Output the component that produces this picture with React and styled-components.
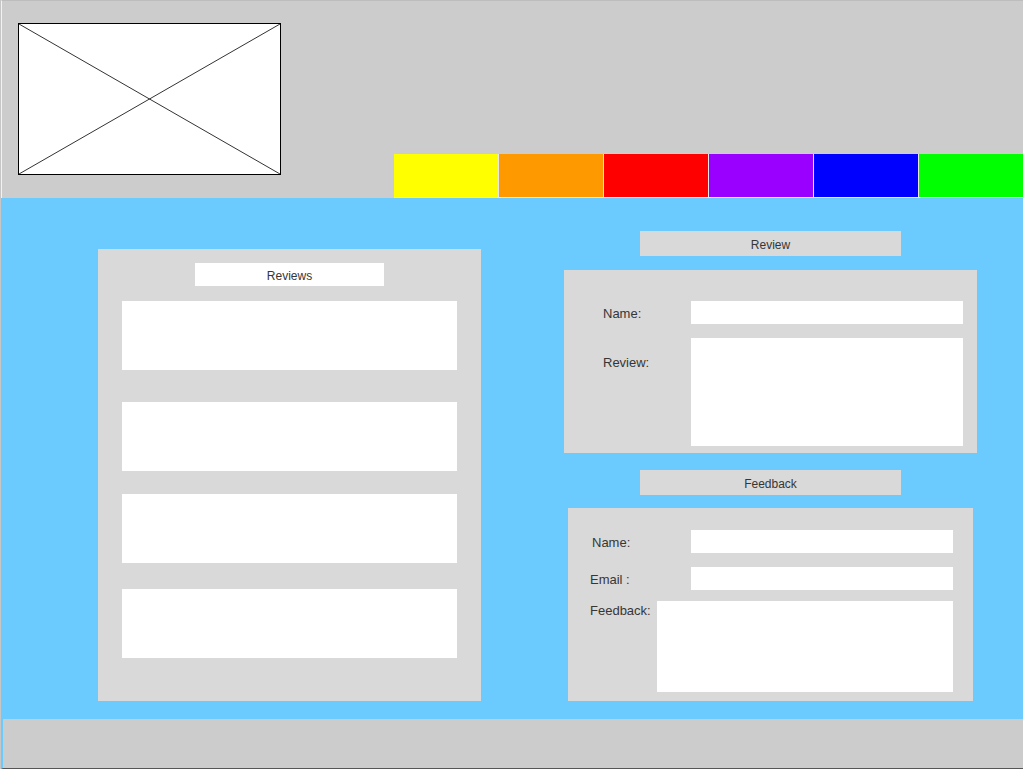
import React from 'react'
import styled, { createGlobalStyle } from 'styled-components'

const GlobalStyle = createGlobalStyle`
  html, body {
    margin: 0;
    padding: 0;
    background: #c6c6c6;
  }
  * {
    box-sizing: border-box;
  }
`

const BLUE = '#6ccbfe'
const PANEL = '#d9d9d9'
const navColors = ['#ffff00', '#ff9900', '#ff0000', '#9900ff', '#0000ff', '#00ff00']
const cardGaps = [15, 32, 23, 26]

const App = () => {
  return (
    <Page>
      <GlobalStyle />
      <Header>
        <Logo>
          <svg width="261" height="150" viewBox="0 0 261 150" preserveAspectRatio="none">
            <line x1="0" y1="0" x2="261" y2="150" stroke="#333" strokeWidth="1" />
            <line x1="261" y1="0" x2="0" y2="150" stroke="#333" strokeWidth="1" />
          </svg>
        </Logo>
        <Nav>
          {navColors.map((c) => (
            <NavCell key={c} $color={c} />
          ))}
        </Nav>
      </Header>

      <Main>
        <ReviewsPanel>
          <PanelTitle>Reviews</PanelTitle>
          {cardGaps.map((g, i) => (
            <ReviewCard key={i} $gap={g} />
          ))}
        </ReviewsPanel>

        <RightColumn>
          <SectionBar $after={14}>Review</SectionBar>
          <FormPanel $width={413} $pad="31px 14px 7px 39px" $after={17}>
            <FormRow>
              <Label $width={88}>Name:</Label>
              <Field />
            </FormRow>
            <FormRow $top $gap={14}>
              <Label $width={88} $offset={15}>Review:</Label>
              <Area $height={108} />
            </FormRow>
          </FormPanel>

          <SectionBar $after={13}>Feedback</SectionBar>
          <FormPanel $width={405} $pad="22px 20px 9px 22px">
            <FormRow>
              <Label $width={101} $indent={2}>Name:</Label>
              <Field />
            </FormRow>
            <FormRow $gap={14}>
              <Label $width={101}>Email :</Label>
              <Field />
            </FormRow>
            <FormRow $top $gap={11}>
              <Label $width={67}>Feedback:</Label>
              <Area $height={91} />
            </FormRow>
          </FormPanel>
        </RightColumn>
      </Main>

      <Footer />
    </Page>
  )
}

const Page = styled.div`
  width: 1023px;
  padding-left: 1px;
  background: #c6c6c6;
  font-family: "Liberation Sans", Arial, sans-serif;
  color: #363636;
`

const Header = styled.header`
  display: flex;
  align-items: flex-start;
  height: 198px;
  background: #cccccc;
  border-top: 1px solid #bdbdbd;
  border-left: 1px solid #f2f2f2;
`

const Logo = styled.div`
  width: 263px;
  height: 152px;
  margin: 22px 0 0 16px;
  background: #fff;
  border: 1px solid #000;

  svg {
    display: block;
  }
`

const Nav = styled.nav`
  display: flex;
  gap: 1px;
  margin-left: auto;
  align-self: flex-end;
  padding-bottom: 1px;
  background: #e8e8e8;
`

const NavCell = styled.div`
  width: 104px;
  height: 43px;
  background: ${({ $color }) => $color};
`

const Main = styled.main`
  display: flex;
  align-items: flex-start;
  gap: 83px;
  padding: 33px 0 18px 97px;
  background: ${BLUE};
`

const ReviewsPanel = styled.section`
  width: 383px;
  margin-top: 18px;
  padding: 14px 24px 43px;
  display: flex;
  flex-direction: column;
  align-items: center;
  background: ${PANEL};
`

const PanelTitle = styled.h3`
  margin: 0;
  width: 189px;
  height: 23px;
  padding-top: 2px;
  display: flex;
  align-items: center;
  justify-content: center;
  background: #fff;
  font-size: 12px;
  font-weight: normal;
`

const ReviewCard = styled.div`
  width: 100%;
  height: 69px;
  margin-top: ${({ $gap }) => $gap}px;
  background: #fff;
`

const RightColumn = styled.div`
  width: 413px;
  display: flex;
  flex-direction: column;
  align-items: center;
`

const SectionBar = styled.h4`
  margin: 0 0 ${({ $after }) => $after}px;
  width: 261px;
  height: 25px;
  padding-top: 2px;
  display: flex;
  align-items: center;
  justify-content: center;
  background: ${PANEL};
  font-size: 12px;
  font-weight: normal;
`

const FormPanel = styled.form`
  width: ${({ $width }) => $width}px;
  margin: 0 0 ${({ $after }) => $after || 0}px;
  padding: ${({ $pad }) => $pad};
  display: flex;
  flex-direction: column;
  background: ${PANEL};
`

const FormRow = styled.div`
  display: flex;
  align-items: ${({ $top }) => ($top ? 'flex-start' : 'center')};
  margin-top: ${({ $gap }) => $gap || 0}px;
`

const Label = styled.label`
  flex: none;
  width: ${({ $width }) => $width}px;
  padding-left: ${({ $indent }) => $indent || 0}px;
  padding-top: 2px;
  margin-top: ${({ $offset }) => $offset || 0}px;
  font-size: 13px;
  line-height: 15px;
  white-space: nowrap;
`

const Field = styled.input`
  flex: 1;
  height: 23px;
  border: none;
  padding: 0;
  background: #fff;
  outline: none;
`

const Area = styled.textarea`
  flex: 1;
  height: ${({ $height }) => $height}px;
  border: none;
  padding: 0;
  background: #fff;
  resize: none;
  outline: none;
`

const Footer = styled.footer`
  height: 50px;
  background: #cccccc;
  border-left: 2px solid ${BLUE};
  border-bottom: 1px solid #555;
`

export default App
